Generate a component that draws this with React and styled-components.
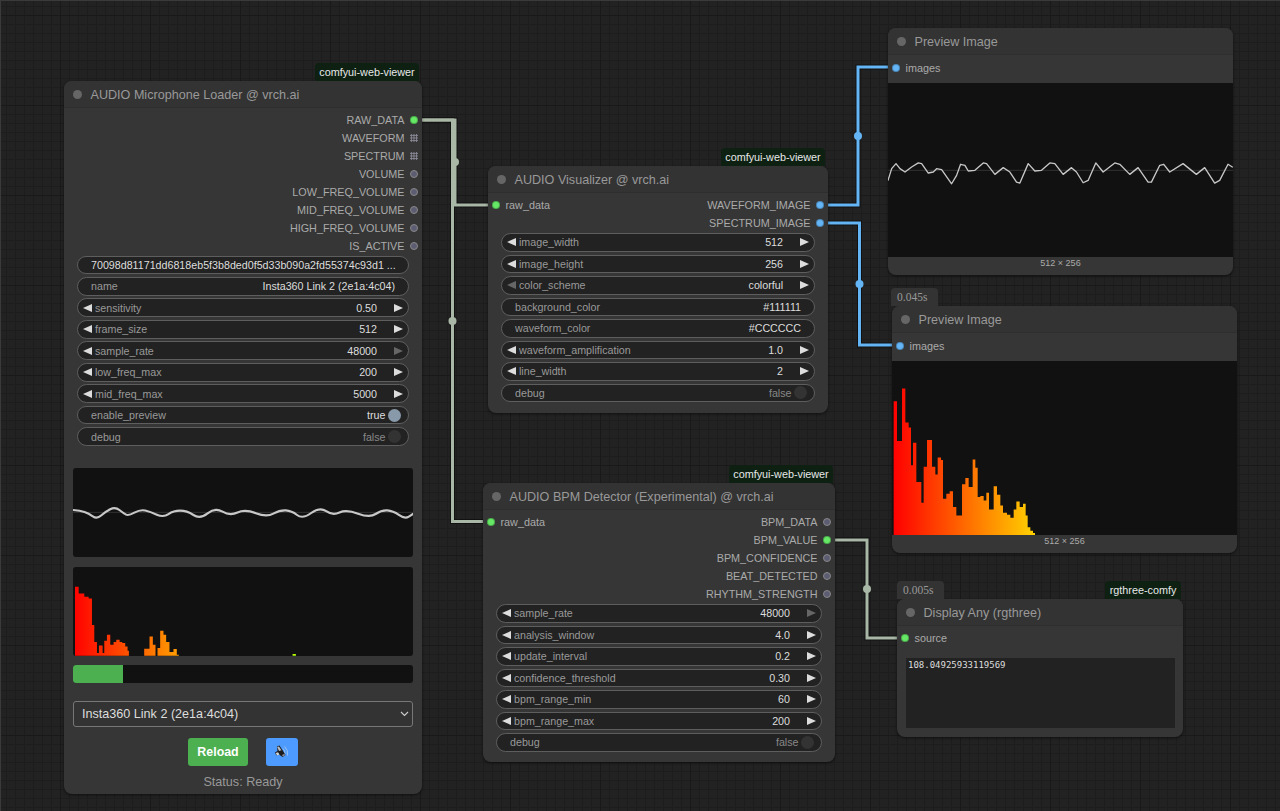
import React from 'react';
import styled, { createGlobalStyle } from 'styled-components';

const GlobalStyle = createGlobalStyle`
  html, body {
    margin: 0;
    height: 100%;
    overflow: hidden;
    background: #222;
    font-family: "Liberation Sans", Arial, sans-serif;
  }
`;

const Canvas = styled.div`
  position: relative;
  width: 1280px;
  height: 811px;
  overflow: hidden;
  background-color: #222;
  background-image:
    linear-gradient(to right, #191919 1px, transparent 1px),
    linear-gradient(to bottom, #191919 1px, transparent 1px),
    linear-gradient(to right, #1d1d1d 1px, transparent 1px),
    linear-gradient(to bottom, #1d1d1d 1px, transparent 1px);
  background-size: 90px 90px, 90px 90px, 9px 9px, 9px 9px;
  background-position: 60px 0, 0 15px, 6px 0, 0 6px;
  box-shadow: inset 1px 1px 0 #3a3a3a;
`;

const Wires = styled.svg`
  position: absolute;
  inset: 0;
`;

const Node = styled.section`
  position: absolute;
  left: ${(p) => p.$x}px;
  top: ${(p) => p.$y}px;
  width: ${(p) => p.$w}px;
  height: ${(p) => p.$h}px;
  display: flex;
  flex-direction: column;
  background: #363636;
  border-radius: 8px;
  box-shadow: 0 1px 3px rgba(0, 0, 0, 0.55);
`;

const Title = styled.header`
  flex: none;
  height: 27px;
  box-sizing: border-box;
  display: flex;
  align-items: center;
  gap: 8.5px;
  padding: 1px 0 0 9px;
  background: #333;
  border-bottom: 1px solid #2e2e2e;
  border-radius: 8px 8px 0 0;
  color: #999;
  font-size: 12.6px;
`;

const TitleDot = styled.span`
  flex: none;
  width: 9px;
  height: 9px;
  margin-top: -1px;
  border-radius: 50%;
  background: #666;
`;

const Badge = styled.div`
  position: absolute;
  bottom: 100%;
  right: ${(p) => p.$right}px;
  width: ${(p) => p.$w}px;
  height: 18px;
  line-height: 18px;
  text-align: center;
  background: #0d2012;
  border-radius: 4px 4px 0 0;
  color: #e8e8e8;
  font-size: 10.8px;
`;

const TimeBadge = styled.div`
  position: absolute;
  bottom: 100%;
  left: ${(p) => p.$left}px;
  width: 47px;
  height: 18px;
  box-sizing: border-box;
  padding-left: 6px;
  line-height: 18px;
  background: #333;
  border-radius: 4px 4px 0 0;
  color: #999;
  font: 11.5px/18px "Liberation Serif", serif;
`;

const SlotArea = styled.div`
  flex: none;
  display: grid;
  grid-template-columns: 1fr 1fr;
  padding-top: ${(p) => (p.$tight ? 3 : 4)}px;
`;

const SlotColumn = styled.div`
  display: flex;
  flex-direction: column;
  grid-column: ${(p) => (p.$right ? 2 : 1)};
  grid-row: 1;
  align-items: ${(p) => (p.$right ? 'flex-end' : 'flex-start')};
`;

const Slot = styled.div`
  height: 18px;
  display: flex;
  align-items: center;
  flex-direction: ${(p) => (p.$right ? 'row-reverse' : 'row')};
  gap: 5.5px;
  padding: 0 4px;
  color: #aaa;
  font-size: 10.8px;
  white-space: nowrap;
`;

const PORT = { green: '#66e866', blue: '#64b5f6', grey: '#5c5c72' };

const Port = styled.span`
  flex: none;
  box-sizing: border-box;
  width: 8px;
  height: 8px;
  border-radius: 50%;
  background: ${(p) => PORT[p.$kind]};
  border: 1px solid ${(p) => (p.$kind === 'grey' ? '#888' : 'rgba(0, 0, 0, 0.25)')};
`;

const GridPort = styled.span`
  flex: none;
  width: 8px;
  height: 8px;
  background-image: radial-gradient(circle at center, #8a8a98 0.9px, transparent 1.1px);
  background-size: 2.67px 2.67px;
`;

const Widgets = styled.div`
  flex: none;
  display: grid;
  grid-template-columns: minmax(0, 1fr);
  grid-auto-rows: 18.6px;
  row-gap: 2.9px;
  margin: ${(p) => p.$top}px 13px 0;
`;

const WidgetRow = styled.div`
  display: flex;
  align-items: center;
  box-sizing: border-box;
  padding: 0 ${(p) => p.$right}px 0 ${(p) => p.$left}px;
  background: #222;
  border: 1px solid #5e5e5e;
  border-radius: 10px;
  color: #999;
  font-size: 10.7px;
  white-space: nowrap;
`;

const Grow = styled.span`
  flex: 1;
`;

const Value = styled.span`
  color: #ddd;
  margin-right: ${(p) => p.$gap ?? 0}px;
`;

const Arrow = styled.span`
  flex: none;
  width: 0;
  height: 0;
  border-top: 4px solid transparent;
  border-bottom: 4px solid transparent;
  ${(p) => (p.$dir === 'left'
    ? `border-right: 9px solid ${p.$off ? '#666' : '#ddd'}; margin-right: 3px;`
    : `border-left: 9px solid ${p.$off ? '#666' : '#ddd'};`)}
`;

const ToggleValue = styled.span`
  color: ${(p) => (p.$on ? '#ddd' : '#888')};
  margin-right: 2.5px;
`;

const Knob = styled.span`
  flex: none;
  width: 13px;
  height: 13px;
  border-radius: 50%;
  background: ${(p) => (p.$on ? '#89a' : '#333')};
`;

const Panel = styled.div`
  flex: none;
  height: ${(p) => p.$h}px;
  margin: ${(p) => p.$top}px 9px 0;
  background: #111;
  border-radius: 3px;
  overflow: hidden;
`;

const Fill = styled.div`
  height: 100%;
  width: ${(p) => p.$value}%;
  background: #4caf50;
`;

const CHEVRON = "url(\"data:image/svg+xml,%3Csvg xmlns='http://www.w3.org/2000/svg' width='9' height='6'%3E%3Cpath d='M1 1l3.5 3.5L8 1' fill='none' stroke='%23ccc' stroke-width='1.1'/%3E%3C/svg%3E\")";

const DeviceSelect = styled.select`
  flex: none;
  appearance: none;
  height: 26px;
  margin: 18px 9px 0;
  padding: 0 8px;
  box-sizing: border-box;
  background: #333 ${CHEVRON} no-repeat right 3px center;
  color: #ddd;
  border: 1px solid #777;
  border-radius: 3px;
  font: 12.6px "Liberation Sans", Arial, sans-serif;
`;

const ButtonRow = styled.div`
  flex: none;
  display: flex;
  justify-content: center;
  gap: 18px;
  margin-top: 11px;
`;

const ReloadButton = styled.button`
  width: 60px;
  height: 28px;
  padding: 0;
  border: 0;
  border-radius: 3px;
  background: #4caf50;
  color: #fff;
  font: bold 12.4px "Liberation Sans", Arial, sans-serif;
`;

const SoundButton = styled.button`
  width: 32px;
  height: 28px;
  padding: 0;
  border: 0;
  border-radius: 3px;
  background: #4d9bff;
  display: flex;
  align-items: center;
  justify-content: center;
`;

const Status = styled.div`
  flex: none;
  margin-top: 9px;
  text-align: center;
  color: #999;
  font-size: 12.6px;
`;

const PreviewImage = styled.div`
  flex: none;
  height: 174px;
  margin-top: 6px;
  background: #111;
`;

const PreviewFooter = styled.div`
  flex: 1;
  display: flex;
  align-items: center;
  justify-content: center;
  padding-bottom: 7px;
  color: #aaa;
  font-size: 9px;
`;

const DisplayText = styled.div`
  flex: none;
  height: 70px;
  box-sizing: border-box;
  margin: 11px 8px 0 9px;
  padding: 1px 2px;
  background: #222;
  color: #ddd;
  font: 9px/13px "DejaVu Sans Mono", monospace;
`;

const ChartSvg = styled.svg`
  display: block;
  width: 100%;
  height: 100%;
`;

// wave points are read from the screenshot, in 3x crop coordinates
const MIC_WAVE = [[38,630],[60,632],[85,640],[110,658],[135,635],[165,620],[190,640],[205,648],[240,628],[270,635],[310,653],[340,632],[380,632],[420,658],[465,622],[510,648],[555,627],[620,652],[660,630],[695,632],[728,658],[780,620],[818,647],[860,628],[930,654],[965,630],[1000,632],[1035,658],[1060,642]];
const PREVIEW_WAVE = [[144,480],[155,445],[168,430],[180,445],[195,455],[215,440],[235,428],[245,430],[265,458],[280,455],[290,445],[305,448],[335,490],[350,465],[362,432],[375,435],[385,452],[405,450],[430,428],[440,430],[465,462],[490,442],[510,455],[530,485],[540,488],[565,430],[585,452],[605,450],[630,428],[645,430],[670,462],[695,442],[710,455],[730,487],[745,480],[768,428],[790,455],[825,428],[840,432],[870,462],[895,442],[925,485],[935,485],[960,435],[972,432],[990,455],[1030,430],[1070,462],[1095,442],[1125,488],[1140,480],[1165,432],[1178,440]];

// [left edge, top] of each step, the last entry closes the shape
const MIC_BARS = [[44,95],[55,115],[72,125],[85,130],[95,210],[102,262],[110,295],[116,272],[127,295],[132,258],[140,240],[150,270],[160,262],[168,255],[178,262],[186,265],[195,275],[202,288],[206,303],[252,282],[268,245],[278,270],[286,303],[292,280],[300,228],[310,240],[318,262],[328,292],[340,283],[350,300],[356,303],[698,298],[708,303]];
const PREVIEW_BARS = [[160,350],[170,468],[185,312],[195,413],[205,428],[212,540],[218,473],[228,590],[243,652],[250,545],[260,465],[275,545],[285,568],[292,517],[302,525],[308,640],[318,625],[328,618],[338,665],[348,690],[365,597],[375,578],[385,605],[397,523],[405,548],[412,635],[420,632],[430,645],[438,622],[446,672],[460,603],[470,628],[480,660],[488,682],[500,688],[510,697],[520,672],[528,648],[538,665],[548,655],[556,690],[562,725],[570,735],[578,742],[584,748]];

const smooth = (pts) => {
  let d = `M${pts[0][0]} ${pts[0][1]}`;
  for (let i = 1; i < pts.length - 1; i++) {
    const mx = (pts[i][0] + pts[i + 1][0]) / 2;
    const my = (pts[i][1] + pts[i + 1][1]) / 2;
    d += ` Q${pts[i][0]} ${pts[i][1]} ${mx} ${my}`;
  }
  const last = pts[pts.length - 1];
  return `${d} L${last[0]} ${last[1]}`;
};

const stairs = (bars, base) => {
  let d = `M${bars[0][0]} ${base}`;
  for (let i = 0; i < bars.length - 1; i++) {
    d += ` L${bars[i][0]} ${bars[i][1]} L${bars[i + 1][0]} ${bars[i][1]}`;
  }
  return `${d} L${bars[bars.length - 1][0]} ${base} Z`;
};

const Waveform = ({ points, box, mid, width, curved }) => (
  <ChartSvg viewBox={box} preserveAspectRatio="none">
    <line x1="0" x2="1300" y1={mid} y2={mid} stroke="#3a3a3a" strokeWidth="2.5" />
    <path
      d={curved ? smooth(points) : `M${points.map((p) => p.join(' ')).join(' L')}`}
      fill="none"
      stroke="#c8c8c8"
      strokeWidth={width}
      strokeLinejoin="round"
      strokeLinecap="round"
    />
  </ChartSvg>
);

const Spectrum = ({ id, bars, box, base, x0, x1 }) => (
  <ChartSvg viewBox={box} preserveAspectRatio="none">
    <defs>
      <linearGradient id={id} gradientUnits="userSpaceOnUse" x1={x0} x2={x1} y1="0" y2="0">
        <stop offset="0" stopColor="#ff0000" />
        <stop offset="0.5" stopColor="#ffff00" />
        <stop offset="1" stopColor="#00ff00" />
      </linearGradient>
    </defs>
    <path d={stairs(bars, base)} fill={`url(#${id})`} />
  </ChartSvg>
);

const SpeakerIcon = () => (
  <svg width="18" height="18" viewBox="0 0 18 18">
    <path d="M11.5 3.5 Q15.5 7 14.5 12.5" fill="none" stroke="#9fc4ef" strokeWidth="1" />
    <path d="M9.8 5.5 Q12.5 7.5 12 11" fill="none" stroke="#9fc4ef" strokeWidth="1" />
    <path d="M4 3.5 L6.5 2.5 L11 9.5 L12.5 12 L9.5 14 L6 11.5 L3.5 12.5 L2 9.5 L4.5 8 Z" fill="#1c1c1c" />
    <path d="M4.2 4 L6 3.4 L8.4 7.2 L6 8 Z" fill="#b8bcc4" />
    <path d="M2.8 10 L5 9.2 L6.5 11.6 L4 12.6 Z" fill="#d8dade" />
    <path d="M9 12 L11.5 10.8 L12 12.2 L9.8 13.6 Z" fill="#8a8e96" />
  </svg>
);

const Widget = ({ kind, label, value, off, offRight }) => {
  if (kind === 'num') {
    return (
      <WidgetRow $left={5} $right={5}>
        <Arrow $dir="left" $off={off} />
        {label}
        <Grow />
        <Value $gap={17}>{value}</Value>
        <Arrow $dir="right" $off={offRight} />
      </WidgetRow>
    );
  }
  if (kind === 'toggle') {
    return (
      <WidgetRow $left={13} $right={7}>
        <Grow>{label}</Grow>
        <ToggleValue $on={value}>{value ? 'true' : 'false'}</ToggleValue>
        <Knob $on={value} />
      </WidgetRow>
    );
  }
  return (
    <WidgetRow $left={13} $right={13}>
      {label}
      <Grow />
      <Value>{value}</Value>
    </WidgetRow>
  );
};

const Slots = ({ inputs = [], outputs = [], tight }) => (
  <SlotArea $tight={tight}>
    <SlotColumn>
      {inputs.map(([name, kind]) => (
        <Slot key={name}><Port $kind={kind} />{name}</Slot>
      ))}
    </SlotColumn>
    <SlotColumn $right>
      {outputs.map(([name, kind]) => (
        <Slot key={name} $right>
          {kind === 'grid' ? <GridPort /> : <Port $kind={kind} />}
          {name}
        </Slot>
      ))}
    </SlotColumn>
  </SlotArea>
);

const NodeTitle = ({ children }) => (
  <Title><TitleDot />{children}</Title>
);

const MIC_WIDGETS = [
  { kind: 'text', label: '', value: '70098d81171dd6818eb5f3b8ded0f5d33b090a2fd55374c93d1 ...' },
  { kind: 'text', label: 'name', value: 'Insta360 Link 2 (2e1a:4c04)' },
  { kind: 'num', label: 'sensitivity', value: '0.50' },
  { kind: 'num', label: 'frame_size', value: '512' },
  { kind: 'num', label: 'sample_rate', value: '48000', offRight: true },
  { kind: 'num', label: 'low_freq_max', value: '200' },
  { kind: 'num', label: 'mid_freq_max', value: '5000' },
  { kind: 'toggle', label: 'enable_preview', value: true },
  { kind: 'toggle', label: 'debug', value: false },
];

const VIS_WIDGETS = [
  { kind: 'num', label: 'image_width', value: '512' },
  { kind: 'num', label: 'image_height', value: '256' },
  { kind: 'num', label: 'color_scheme', value: 'colorful', off: true },
  { kind: 'text', label: 'background_color', value: '#111111' },
  { kind: 'text', label: 'waveform_color', value: '#CCCCCC' },
  { kind: 'num', label: 'waveform_amplification', value: '1.0' },
  { kind: 'num', label: 'line_width', value: '2' },
  { kind: 'toggle', label: 'debug', value: false },
];

const BPM_WIDGETS = [
  { kind: 'num', label: 'sample_rate', value: '48000', offRight: true },
  { kind: 'num', label: 'analysis_window', value: '4.0' },
  { kind: 'num', label: 'update_interval', value: '0.2' },
  { kind: 'num', label: 'confidence_threshold', value: '0.30' },
  { kind: 'num', label: 'bpm_range_min', value: '60' },
  { kind: 'num', label: 'bpm_range_max', value: '200' },
  { kind: 'toggle', label: 'debug', value: false },
];

const WIRES = [
  { color: '#a9b8a6', points: '422,120 455,120 455,205 492,205', dot: [455, 162] },
  { color: '#a9b8a6', points: '422,120 452.5,120 452.5,521.5 487,521.5', dot: [452.5, 321] },
  { color: '#64b5f6', points: '824,205 858,205 858,67 892,67', dot: [858, 136] },
  { color: '#64b5f6', points: '824,223 859.5,223 859.5,345 896,345', dot: [859.5, 284] },
  { color: '#a9b8a6', points: '832,540 867,540 867,638 901,638', dot: [867, 589] },
];

const renderWidgets = (list) => list.map((w) => <Widget key={w.label || w.value} {...w} />);

export default function App() {
  return (
    <Canvas>
      <GlobalStyle />
      <Wires width="1280" height="811">
        {WIRES.map((w) => (
          <polyline key={`${w.points}-b`} points={w.points} fill="none" stroke="#111" strokeWidth="5" />
        ))}
        {WIRES.map((w) => (
          <g key={w.points}>
            <polyline points={w.points} fill="none" stroke={w.color} strokeWidth="3" />
            <circle cx={w.dot[0]} cy={w.dot[1]} r="4" fill={w.color} />
          </g>
        ))}
      </Wires>

      <Node $x={64} $y={81} $w={358} $h={713}>
        <Badge $right={3} $w={104}>comfyui-web-viewer</Badge>
        <NodeTitle>AUDIO Microphone Loader @ vrch.ai</NodeTitle>
        <Slots
          tight
          outputs={[
            ['RAW_DATA', 'green'], ['WAVEFORM', 'grid'], ['SPECTRUM', 'grid'], ['VOLUME', 'grey'],
            ['LOW_FREQ_VOLUME', 'grey'], ['MID_FREQ_VOLUME', 'grey'], ['HIGH_FREQ_VOLUME', 'grey'], ['IS_ACTIVE', 'grey'],
          ]}
        />
        <Widgets $top={0.5}>{renderWidgets(MIC_WIDGETS)}</Widgets>
        <Panel $h={89} $top={21.9}>
          <Waveform points={MIC_WAVE} box="38 503 1022 269" mid={637} width={6.5} curved />
        </Panel>
        <Panel $h={89} $top={10}>
          <Spectrum id="micSpec" bars={MIC_BARS} box="38 35 1022 269" base={303} x0={38} x1={1060} />
        </Panel>
        <Panel $h={18} $top={9}>
          <Fill $value={14.7} />
        </Panel>
        <DeviceSelect defaultValue="link">
          <option value="link">Insta360 Link 2 (2e1a:4c04)</option>
        </DeviceSelect>
        <ButtonRow>
          <ReloadButton>Reload</ReloadButton>
          <SoundButton aria-label="sound"><SpeakerIcon /></SoundButton>
        </ButtonRow>
        <Status>Status: Ready</Status>
      </Node>

      <Node $x={488} $y={166} $w={340} $h={247}>
        <Badge $right={3} $w={104}>comfyui-web-viewer</Badge>
        <NodeTitle>AUDIO Visualizer @ vrch.ai</NodeTitle>
        <Slots
          tight
          inputs={[['raw_data', 'green']]}
          outputs={[['WAVEFORM_IMAGE', 'blue'], ['SPECTRUM_IMAGE', 'blue']]}
        />
        <Widgets $top={1.2}>{renderWidgets(VIS_WIDGETS)}</Widgets>
      </Node>

      <Node $x={483} $y={483} $w={352} $h={279}>
        <Badge $right={2} $w={104}>comfyui-web-viewer</Badge>
        <NodeTitle>AUDIO BPM Detector (Experimental) @ vrch.ai</NodeTitle>
        <Slots
          tight
          inputs={[['raw_data', 'green']]}
          outputs={[
            ['BPM_DATA', 'grey'], ['BPM_VALUE', 'green'], ['BPM_CONFIDENCE', 'grey'],
            ['BEAT_DETECTED', 'grey'], ['RHYTHM_STRENGTH', 'grey'],
          ]}
        />
        <Widgets $top={1.2}>{renderWidgets(BPM_WIDGETS)}</Widgets>
      </Node>

      <Node $x={888} $y={28} $w={345} $h={247}>
        <NodeTitle>Preview Image</NodeTitle>
        <Slots inputs={[['images', 'blue']]} />
        <PreviewImage>
          <Waveform points={PREVIEW_WAVE} box="144 190 1036 518" mid={450} width={4} />
        </PreviewImage>
        <PreviewFooter>512 × 256</PreviewFooter>
      </Node>

      <Node $x={892} $y={306} $w={345} $h={247}>
        <TimeBadge $left={-1}>0.045s</TimeBadge>
        <NodeTitle>Preview Image</NodeTitle>
        <Slots inputs={[['images', 'blue']]} />
        <PreviewImage>
          <Spectrum id="imgSpec" bars={PREVIEW_BARS} box="155 230 1035 518" base={748} x0={160} x1={1190} />
        </PreviewImage>
        <PreviewFooter>512 × 256</PreviewFooter>
      </Node>

      <Node $x={897} $y={599} $w={286} $h={138}>
        <TimeBadge $left={0}>0.005s</TimeBadge>
        <Badge $right={2} $w={76}>rgthree-comfy</Badge>
        <NodeTitle>Display Any (rgthree)</NodeTitle>
        <Slots tight inputs={[['source', 'green']]} />
        <DisplayText>108.04925933119569</DisplayText>
      </Node>
    </Canvas>
  );
}
